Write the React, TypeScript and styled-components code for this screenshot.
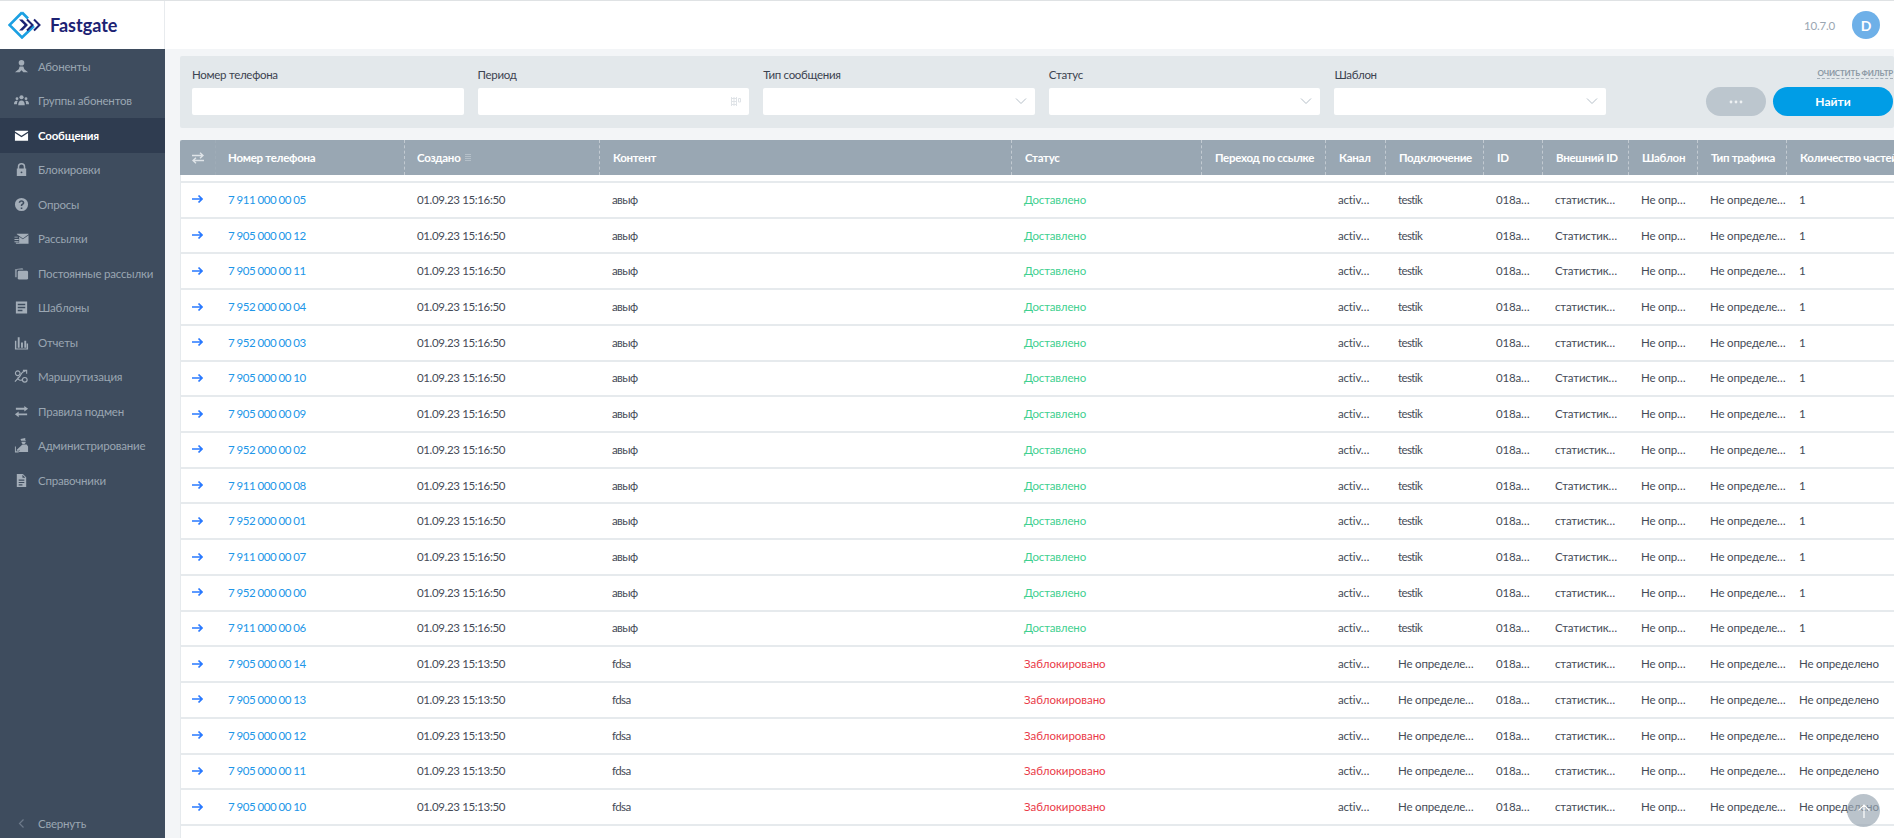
import React from "react";
import styled, { createGlobalStyle } from "styled-components";

const FONT = `Lato, "Noto Sans", sans-serif`;
const COLUMNS = "36px 189px 195px 412px 190px 124px 60px 98px 59px 86px 69px 89px 200px";

const GlobalStyle = createGlobalStyle`
  html, body {
    margin: 0;
    height: 100%;
    overflow: hidden;
    background: #f3f5f7;
    font-family: ${FONT};
    font-size: 12px;
  }
  * { box-sizing: border-box; }
`;

const Page = styled.div`
  display: flex;
  flex-direction: column;
  height: 838px;
  overflow: hidden;
  border-top: 1px solid #dfe2e4;
`;

const Header = styled.header`
  flex: none;
  display: flex;
  align-items: center;
  height: 48px;
  background: #fff;
`;

const LogoBox = styled.div`
  display: flex;
  align-items: center;
  gap: 8px;
  width: 165px;
  height: 100%;
  padding-left: 8px;
  border-right: 1px solid #e8ebee;
`;

const LogoText = styled.span`
  font-size: 18px;
  font-weight: 700;
  color: #1c2273;
  margin-left: -2px;
`;

const HeaderRight = styled.div`
  margin-left: auto;
  display: flex;
  align-items: center;
  gap: 17px;
  padding-right: 14px;
`;

const Version = styled.span`
  font-size: 11.5px;
  letter-spacing: -0.2px;
  color: #9aa6b2;
`;

const Avatar = styled.div`
  width: 28px;
  height: 28px;
  border-radius: 50%;
  background: #6eb0e8;
  color: #fff;
  font-size: 14px;
  font-weight: 700;
  display: flex;
  align-items: center;
  justify-content: center;
`;

const Body = styled.div`
  flex: 1;
  display: flex;
  min-height: 0;
`;

const Sidebar = styled.nav`
  flex: none;
  width: 165px;
  display: flex;
  flex-direction: column;
  background: #3e4c5e;
`;

const NavItem = styled.div<{ $active?: boolean }>`
  display: flex;
  align-items: center;
  height: 34.5px;
  padding-left: 14px;
  gap: 9px;
  font-size: 11.5px;
  letter-spacing: -0.2px;
  white-space: nowrap;
  color: ${({ $active }) => ($active ? "#fff" : "#9aa6b2")};
  background: ${({ $active }) => ($active ? "#2f3c50" : "transparent")};
  font-weight: ${({ $active }) => ($active ? 700 : 400)};
  svg {
    flex: none;
    width: 15px;
    height: 15px;
    color: ${({ $active }) => ($active ? "#fff" : "#a3adb8")};
  }
`;

const Collapse = styled(NavItem)`
  margin-top: auto;
  margin-bottom: -3px;
  svg {
    color: #6d7a8a;
  }
`;

const Main = styled.main`
  flex: 1;
  min-width: 0;
  padding: 7px 0 0 15px;
  overflow: hidden;
`;

const FilterPanel = styled.section`
  display: flex;
  height: 72px;
  padding: 12px 1px 12px 12px;
  margin-bottom: 12px;
  background: #e3e8eb;
  border-radius: 2px;
`;

const Fields = styled.div`
  display: grid;
  grid-template-columns: repeat(5, 271.6px);
  column-gap: 14px;
`;

const Field = styled.div`
  display: flex;
  flex-direction: column;
  gap: 6px;
`;

const Label = styled.label`
  font-size: 11.5px;
  letter-spacing: -0.3px;
  line-height: 14px;
  color: #3c4350;
`;

const Input = styled.div`
  position: relative;
  height: 27px;
  background: #fff;
  border-radius: 2px;
  svg {
    position: absolute;
    right: 8px;
    top: 9px;
    color: #b5bfc8;
  }
`;

const Actions = styled.div`
  margin-left: auto;
  display: flex;
  flex-direction: column;
  align-items: flex-end;
  justify-content: space-between;
`;

const ClearFilter = styled.span`
  font-size: 8px;
  font-weight: 700;
  letter-spacing: -0.2px;
  line-height: 10px;
  color: #8c99a5;
  border-bottom: 1px dashed #a3aeb8;
`;

const ButtonRow = styled.div`
  display: flex;
  gap: 7px;
`;

const Pill = styled.button<{ $primary?: boolean }>`
  display: flex;
  align-items: center;
  justify-content: center;
  height: 29px;
  width: ${({ $primary }) => ($primary ? "120px" : "60px")};
  border: 0;
  padding: 0;
  border-radius: 15px;
  background: ${({ $primary }) => ($primary ? "#009de6" : "#bcc6ce")};
  color: #fff;
  font-family: ${FONT};
  font-size: 12px;
  font-weight: 700;
`;

const Table = styled.section`
  background: #fff;
  border-left: 1px solid #e6eaed;
`;

const HeadRow = styled.div`
  display: grid;
  grid-template-columns: ${COLUMNS};
  height: 35px;
  margin-left: -1px;
  margin-bottom: 6px;
  background: #99a7b3;
  border-radius: 2px 0 0 0;
`;

const HeadCell = styled.div`
  display: flex;
  align-items: center;
  gap: 5px;
  padding-left: 12px;
  white-space: nowrap;
  overflow: hidden;
  color: #fff;
  font-weight: 700;
  font-size: 11.5px;
  letter-spacing: -0.28px;
  border-right: 1px dashed rgba(255, 255, 255, 0.4);
  &:first-child { border-right-color: rgba(255, 255, 255, 0.06); }
  &:last-child { border-right: 0; }
  &:nth-child(n + 4) { padding-left: 13px; }
`;

const Row = styled.div`
  display: grid;
  grid-template-columns: ${COLUMNS};
  height: 35.72px;
  margin-left: -1px;
  border-top: 2px solid #e6eaed;
  color: #454b57;
`;

const Cell = styled.div<{ $color?: string }>`
  display: flex;
  align-items: center;
  padding-left: 12px;
  padding-bottom: 1px;
  white-space: nowrap;
  overflow: hidden;
  font-size: 11.5px;
  letter-spacing: -0.17px;
  color: ${({ $color }) => $color || "inherit"};
`;

const PhoneCell = styled(Cell)`
  color: #2196e8;
  letter-spacing: -0.5px;
`;

const DateCell = styled(Cell)`
  letter-spacing: -0.36px;
`;

const ShortCell = styled(Cell)`
  letter-spacing: -0.6px;
`;

const BlockedCell = styled(Cell)`
  color: #ea3a48;
  letter-spacing: -0.03px;
`;

const ScrollTop = styled.button`
  position: fixed;
  left: 1847px;
  top: 794px;
  width: 33px;
  height: 33px;
  padding: 0;
  border: 0;
  border-radius: 50%;
  background: rgba(153, 167, 179, 0.68);
  display: flex;
  align-items: center;
  justify-content: center;
  color: #fff;
`;

const Svg: React.FC<{ children: React.ReactNode; size?: number }> = ({ children, size = 16 }) => (
  <svg viewBox="0 0 16 16" width={size} height={size} fill="currentColor">
    {children}
  </svg>
);

const icons: Record<string, React.ReactNode> = {
  subscribers: (
    <Svg>
      <circle cx="8" cy="4" r="3" />
      <path d="M6 8h4l1 3 4 3H10l-2-2-2 2H1l4-3z" />
    </Svg>
  ),
  groups: (
    <Svg>
      <circle cx="8" cy="4.5" r="2.2" />
      <circle cx="3.2" cy="6" r="1.5" />
      <circle cx="12.8" cy="6" r="1.5" />
      <path d="M4.5 13c0-3.200 1.200-5 3.500-5s3.500 1.800 3.500 5zM0 12c0-2.300.8-3.800 2.800-3.800.5 0 .8.100 1.100.2C3.300 9.400 3.100 10.600 3.100 12zM16 12c0-2.300-.8-3.800-2.800-3.800-.5 0-.8.100-1.100.2.600 1 .8 2.200.8 3.600z" />
    </Svg>
  ),
  messages: (
    <Svg>
      <path d="M1 3h14v.6L8 8.300 1 3.600zM1 5.200l7 4.600 7-4.600V13.500H1z" />
    </Svg>
  ),
  locks: (
    <Svg>
      <path d="M8 1a4 4 0 0 0-4 4v2H3v8h10V7h-1V5a4 4 0 0 0-4-4zm-2.400 6V5a2.400 2.400 0 0 1 4.800 0v2zM8 10a1 1 0 1 1 0 2 1 1 0 0 1 0-2z" fillRule="evenodd" />
    </Svg>
  ),
  polls: (
    <Svg>
      <path d="M8 1a7 7 0 1 0 0 14A7 7 0 0 0 8 1zm-.8 10.200h1.700v1.600H7.200zM8 3.500c1.700 0 3 1 3 2.500 0 1.200-.7 1.700-1.400 2.200-.5.400-.8.600-.8 1.300H7.200c0-1.200.5-1.700 1.200-2.200.5-.4.900-.7.900-1.300 0-.6-.6-1-1.300-1-.8 0-1.300.5-1.400 1.200H5c.1-1.600 1.300-2.700 3-2.700z" fillRule="evenodd" />
    </Svg>
  ),
  mailings: (
    <Svg>
      <path d="M3 3h12.500v.5L9.500 8 3 3.500zM.5 6H4v1H.5zM.5 8.500H5v1H.5zM.5 11H5v1H.5zM5.500 6l4 2.800 6-4.200v8.900H2v-1h3.500z" />
    </Svg>
  ),
  permanent: (
    <Svg>
      <path d="M1 3.500 9 2l1 2H4.500a1.500 1.500 0 0 0-1.500 1.500V12H1z" opacity="0.7" />
      <rect x="4" y="5" width="11" height="9.500" rx="1.500" />
    </Svg>
  ),
  templates: (
    <Svg>
      <path d="M2 1.500h12v13H2zM4 4v1.500h8V4zM4 7.200v1.500h8V7.200zM4 10.500V12h5v-1.500z" fillRule="evenodd" />
    </Svg>
  ),
  reports: (
    <Svg>
      <path d="M1 14.500h14v1H1zM1 6h1.500v8.500H1zM4 2.500h2v11H4zM7.500 8h2v5.500h-2zM11 6h2v7.500h-2zM13.500 9H15v5.500h-1.500z" />
    </Svg>
  ),
  routing: (
    <Svg>
      <g fill="none" stroke="currentColor" strokeWidth="1.200">
        <circle cx="4" cy="4.500" r="2.500" />
        <circle cx="11.500" cy="11.500" r="2.500" />
        <path d="M1 13.500 6 8c1-1 1.500-3 3-4.500l4-2M9.500 1.500H13.500V5M4 9c0 3 3 3.500 5 2.500" />
      </g>
    </Svg>
  ),
  rules: (
    <Svg>
      <path d="M11 2l4 3-4 3V6H2V4h9zM5 8v2h9v2H5v2l-4-3z" />
    </Svg>
  ),
  admin: (
    <Svg>
      <path d="M7 1l5-1v2l1 1H7.500zM8 4h4.500c0 1.500-1 2.500-2.300 2.500S8 5.500 8 4zM6 13l1-4 2.500-2h4L15 9v6H5zM1 9h1v5h3v1.500H1zM3 12.500 9 7l1 1-5 5.500H3z" />
    </Svg>
  ),
  refs: (
    <Svg>
      <path d="M3 1h6.500L13 4.500V15H3zM9 1.800V5h3.200zM5 7v1.200h6V7zM5 9.500v1.200h6V9.500zM5 12v1.200h4V12z" fillRule="evenodd" />
    </Svg>
  ),
};

const navItems = [
  ["subscribers", "Абоненты"],
  ["groups", "Группы абонентов"],
  ["messages", "Сообщения"],
  ["locks", "Блокировки"],
  ["polls", "Опросы"],
  ["mailings", "Рассылки"],
  ["permanent", "Постоянные рассылки"],
  ["templates", "Шаблоны"],
  ["reports", "Отчеты"],
  ["routing", "Маршрутизация"],
  ["rules", "Правила подмен"],
  ["admin", "Администрирование"],
  ["refs", "Справочники"],
];

const Logo = () => (
  <svg width="36" height="28" viewBox="0 0 36 28">
    <path d="M14 1.500 1.500 14 14 26.500 26 15" fill="none" stroke="#1ba0e2" strokeWidth="2.600" />
    <path d="M14 1.500 20 7.500" fill="none" stroke="#1ba0e2" strokeWidth="2.600" />
    <path d="M11 8.500h3.500L20 14l-5.500 5.500H11l5.500-5.500z" fill="#1c2273" />
    <path d="M19 8.500 24.500 14 19 19.500M26 8.500 31.500 14 26 19.500" fill="none" stroke="#1c2273" strokeWidth="2" />
  </svg>
);

const Chevron = () => (
  <svg width="12" height="8" viewBox="0 0 12 8" fill="none" stroke="currentColor">
    <path d="M1 1.500 6 6.500 11 1.500" />
  </svg>
);

const CalendarIcon = () => (
  <svg width="10" height="9" viewBox="0 0 10 9" fill="none" stroke="#dfe3e7">
    <path d="M.5 0v9M3 0v9M5.500 0v9M.5 1.500h5M.5 4.500h5M.5 7.500h5M7.500 1.500h2V5h-2z" />
  </svg>
);

const ArrowRight = () => (
  <svg width="11" height="10" viewBox="0 0 11 10" fill="none" stroke="#2979ff" strokeWidth="1.700">
    <path d="M0 5h10M6.500 1.500 10 5 6.500 8.500" />
  </svg>
);

const Exchange = () => (
  <svg width="12" height="12" viewBox="0 0 12 12" fill="none" stroke="#dfe4e8" strokeWidth="1.400">
    <path d="M0 3.500h11M8 .8l3 2.700-3 2.700M12 8.500H1M4 5.800 1 8.500l3 2.700" />
  </svg>
);

const SortIcon = () => (
  <svg width="6" height="7" viewBox="0 0 6 7" fill="#b5c0c9">
    <path d="M0 0h6v1H0zM0 2h6v1H0zM0 4h6v1H0zM0 6h6v1H0z" />
  </svg>
);

const Dots = () => (
  <svg width="14" height="4" viewBox="0 0 14 4" fill="#eef1f3">
    <circle cx="2" cy="2" r="1.400" />
    <circle cx="7" cy="2" r="1.400" />
    <circle cx="12" cy="2" r="1.400" />
  </svg>
);

const heads = [
  "Номер телефона", "Создано", "Контент", "Статус", "Переход по ссылке", "Канал",
  "Подключение", "ID", "Внешний ID", "Шаблон", "Тип трафика", "Количество частей",
];

const GREEN = "#3fd08f";

type Msg = { phone: string; upper?: boolean };

const delivered: Msg[] = [
  { phone: "7 911 000 00 05" },
  { phone: "7 905 000 00 12", upper: true },
  { phone: "7 905 000 00 11", upper: true },
  { phone: "7 952 000 00 04" },
  { phone: "7 952 000 00 03" },
  { phone: "7 905 000 00 10", upper: true },
  { phone: "7 905 000 00 09", upper: true },
  { phone: "7 952 000 00 02" },
  { phone: "7 911 000 00 08", upper: true },
  { phone: "7 952 000 00 01" },
  { phone: "7 911 000 00 07", upper: true },
  { phone: "7 952 000 00 00" },
  { phone: "7 911 000 00 06", upper: true },
];

const blocked = ["14", "13", "12", "11", "10", "09"].map((n) => `7 905 000 00 ${n}`);

const App: React.FC = () => (
  <>
    <GlobalStyle />
    <Page>
      <Header>
        <LogoBox>
          <Logo />
          <LogoText>Fastgate</LogoText>
        </LogoBox>
        <HeaderRight>
          <Version>10.7.0</Version>
          <Avatar>D</Avatar>
        </HeaderRight>
      </Header>
      <Body>
        <Sidebar>
          {navItems.map(([key, label]) => (
            <NavItem key={key} $active={key === "messages"}>
              {icons[key]}
              {label}
            </NavItem>
          ))}
          <Collapse>
            <svg viewBox="0 0 15 15" fill="none" stroke="currentColor" strokeWidth="1.200">
              <path d="M9.500 3.500 5.500 7.500l4 4" />
            </svg>
            Свернуть
          </Collapse>
        </Sidebar>
        <Main>
          <FilterPanel>
            <Fields>
              <Field>
                <Label>Номер телефона</Label>
                <Input />
              </Field>
              <Field>
                <Label>Период</Label>
                <Input>
                  <CalendarIcon />
                </Input>
              </Field>
              {["Тип сообщения", "Статус", "Шаблон"].map((label) => (
                <Field key={label}>
                  <Label>{label}</Label>
                  <Input>
                    <Chevron />
                  </Input>
                </Field>
              ))}
            </Fields>
            <Actions>
              <ClearFilter>ОЧИСТИТЬ ФИЛЬТР</ClearFilter>
              <ButtonRow>
                <Pill><Dots /></Pill>
                <Pill $primary>Найти</Pill>
              </ButtonRow>
            </Actions>
          </FilterPanel>
          <Table>
            <HeadRow>
              <HeadCell>
                <Exchange />
              </HeadCell>
              {heads.map((h) => (
                <HeadCell key={h}>
                  {h}
                  {h === "Создано" && <SortIcon />}
                </HeadCell>
              ))}
            </HeadRow>
            {delivered.map((m) => (
              <Row key={m.phone}>
                <Cell><ArrowRight /></Cell>
                <PhoneCell>{m.phone}</PhoneCell>
                <DateCell>01.09.23 15:16:50</DateCell>
                <ShortCell>авыф</ShortCell>
                <Cell $color={GREEN}>Доставлено</Cell>
                <Cell />
                <Cell>activ…</Cell>
                <ShortCell>testik</ShortCell>
                <Cell>018a…</Cell>
                <Cell>{m.upper ? "Статистик…" : "статистик…"}</Cell>
                <Cell>Не опр…</Cell>
                <Cell>Не определе…</Cell>
                <Cell>1</Cell>
              </Row>
            ))}
            {blocked.map((phone) => (
              <Row key={phone}>
                <Cell><ArrowRight /></Cell>
                <PhoneCell>{phone}</PhoneCell>
                <DateCell>01.09.23 15:13:50</DateCell>
                <ShortCell>fdsa</ShortCell>
                <BlockedCell>Заблокировано</BlockedCell>
                <Cell />
                <Cell>activ…</Cell>
                <Cell>Не определе…</Cell>
                <Cell>018a…</Cell>
                <Cell>статистик…</Cell>
                <Cell>Не опр…</Cell>
                <Cell>Не определе…</Cell>
                <Cell>Не определено</Cell>
              </Row>
            ))}
          </Table>
        </Main>
      </Body>
      <ScrollTop aria-label="Наверх">
        <svg width="16" height="16" viewBox="0 0 16 16" fill="none" stroke="currentColor" strokeWidth="1.200">
          <path d="M8 15V2M2.500 7.500 8 2l5.500 5.500" />
        </svg>
      </ScrollTop>
    </Page>
  </>
);

export default App;
